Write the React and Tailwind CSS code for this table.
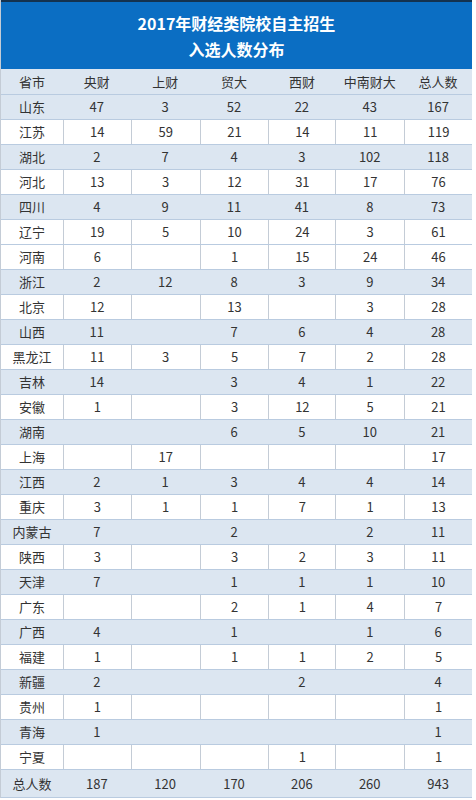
const cols = ["省市", "央财", "上财", "贸大", "西财", "中南财大", "总人数"];

const rows = [
  ["山东", "47", "3", "52", "22", "43", "167"],
  ["江苏", "14", "59", "21", "14", "11", "119"],
  ["湖北", "2", "7", "4", "3", "102", "118"],
  ["河北", "13", "3", "12", "31", "17", "76"],
  ["四川", "4", "9", "11", "41", "8", "73"],
  ["辽宁", "19", "5", "10", "24", "3", "61"],
  ["河南", "6", "", "1", "15", "24", "46"],
  ["浙江", "2", "12", "8", "3", "9", "34"],
  ["北京", "12", "", "13", "", "3", "28"],
  ["山西", "11", "", "7", "6", "4", "28"],
  ["黑龙江", "11", "3", "5", "7", "2", "28"],
  ["吉林", "14", "", "3", "4", "1", "22"],
  ["安徽", "1", "", "3", "12", "5", "21"],
  ["湖南", "", "", "6", "5", "10", "21"],
  ["上海", "", "17", "", "", "", "17"],
  ["江西", "2", "1", "3", "4", "4", "14"],
  ["重庆", "3", "1", "1", "7", "1", "13"],
  ["内蒙古", "7", "", "2", "", "2", "11"],
  ["陕西", "3", "", "3", "2", "3", "11"],
  ["天津", "7", "", "1", "1", "1", "10"],
  ["广东", "", "", "2", "1", "4", "7"],
  ["广西", "4", "", "1", "", "1", "6"],
  ["福建", "1", "", "1", "1", "2", "5"],
  ["新疆", "2", "", "", "2", "", "4"],
  ["贵州", "1", "", "", "", "", "1"],
  ["青海", "1", "", "", "", "", "1"],
  ["宁夏", "", "", "", "1", "", "1"],
];

const widths = ["w-[62px]", "w-[68px]", "w-[69px]", "w-[69px]", "w-[67px]", "w-[69px]", "w-[68px]"];

// shaded rows: 0, 2, 4, then every odd index from 7
const isShaded = (i) => (i <= 4 ? i % 2 === 0 : i >= 7 && i % 2 === 1);

function Row({ cells, shaded, tall }) {
  return (
    <div
      className={`flex border-t border-[#b9cbe0] ${tall ? "h-[28px]" : "h-[25px]"} ${
        shaded ? "bg-[#dce6f1]" : "bg-white"
      }`}
    >
      {cells.map((c, j) => (
        <div
          key={j}
          className={`${widths[j]} flex items-center justify-center ${
            !shaded && j > 0 ? "border-l border-[#c4ccd6]" : ""
          }`}
        >
          {c}
        </div>
      ))}
    </div>
  );
}

export default function App() {
  return (
    <div
      className="w-[476px] h-[800px] bg-white overflow-hidden text-[13px] text-[#333]"
      style={{ fontFamily: '"Noto Sans CJK SC", "Microsoft YaHei", sans-serif' }}
    >
      <div className="w-[472px] border-l border-[#c4ccd6]">
        <div className="h-[69px] bg-[#0b6ec3] border-t-2 border-[#14324f] flex flex-col items-center justify-center text-white font-bold text-[16px] leading-[26px]">
          <div>2017年财经类院校自主招生</div>
          <div>入选人数分布</div>
        </div>
        <div className="flex h-[25px] bg-[#dce6f1]">
          {cols.map((c, j) => (
            <div key={j} className={`${widths[j]} flex items-center justify-center`}>
              {c}
            </div>
          ))}
        </div>
        {rows.map((r, i) => (
          <Row key={i} cells={r} shaded={isShaded(i)} />
        ))}
        <Row cells={["总人数", "187", "120", "170", "206", "260", "943"]} shaded tall />
        <div className="border-t border-[#b9cbe0]" />
      </div>
    </div>
  );
}
